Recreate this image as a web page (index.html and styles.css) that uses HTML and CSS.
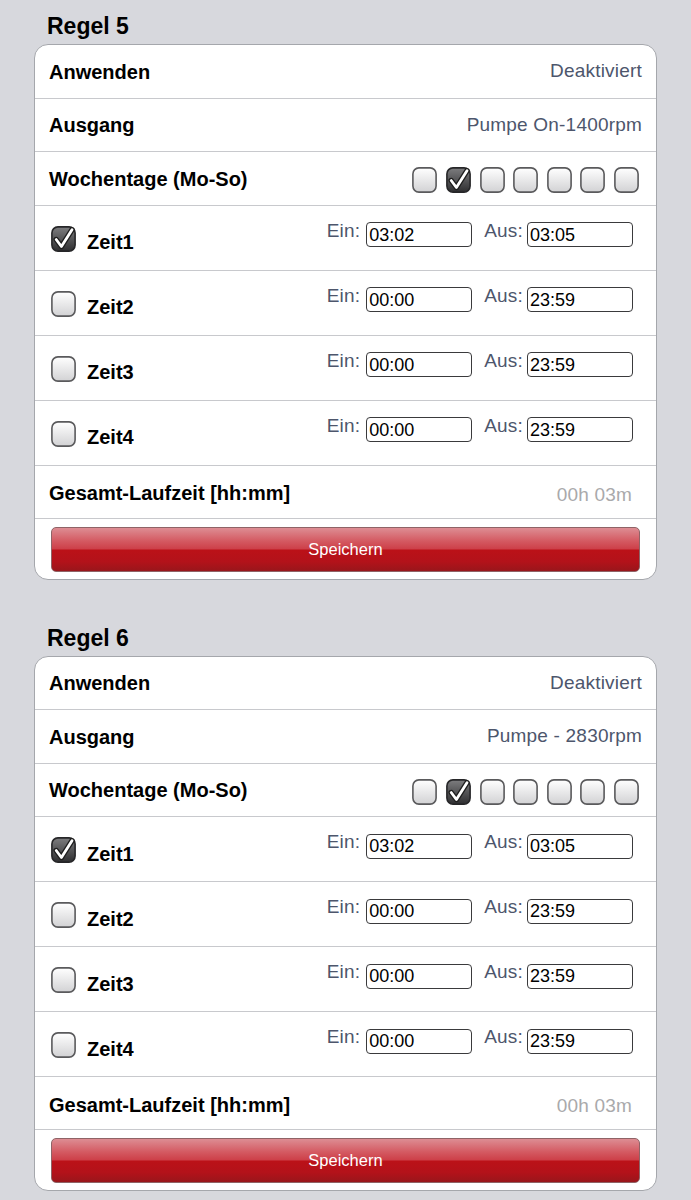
FILE: index.html
```html
<!DOCTYPE html>
<html lang="de">
<head>
<meta charset="utf-8">
<title>Regeln</title>
<link rel="stylesheet" href="styles.css">
</head>
<body>
<svg width="0" height="0" class="defs" aria-hidden="true">
  <defs>
    <linearGradient id="gOff" x1="0" y1="0" x2="0" y2="1">
      <stop offset="0" stop-color="#ffffff"/>
      <stop offset="1" stop-color="#d2d2d4"/>
    </linearGradient>
    <linearGradient id="gOn" x1="0" y1="0" x2="0" y2="1">
      <stop offset="0" stop-color="#7d7d7f"/>
      <stop offset="1" stop-color="#2e2e30"/>
    </linearGradient>
    <symbol id="cbOff" viewBox="0 0 25 26">
      <rect x="0.9" y="0.9" width="23.2" height="24.2" rx="6" ry="6" fill="url(#gOff)" stroke="#5a5a5c" stroke-width="1.6"/>
    </symbol>
    <symbol id="cbOn" viewBox="0 0 25 26">
      <rect x="0.9" y="0.9" width="23.2" height="24.2" rx="6" ry="6" fill="url(#gOn)" stroke="#262628" stroke-width="1.6"/>
      <path d="M5.2 13.5 L10.4 20.5 L21 3.8" fill="none" stroke="#1e1e1e" stroke-width="5.4" stroke-linecap="round" stroke-linejoin="round"/>
      <path d="M5.2 13.5 L10.4 20.5 L21 3.8" fill="none" stroke="#ffffff" stroke-width="2.8" stroke-linecap="round" stroke-linejoin="round"/>
    </symbol>
  </defs>
</svg>

<section class="section">
  <h2 class="title">Regel 5</h2>
  <div class="card">
    <div class="row"><span class="label">Anwenden</span><span class="value">Deaktiviert</span></div>
    <div class="row"><span class="label">Ausgang</span><span class="value">Pumpe On-1400rpm</span></div>
    <div class="row"><span class="label">Wochentage (Mo-So)</span>
      <span class="days">
        <svg class="box"><use href="#cbOff"/></svg>
        <svg class="box"><use href="#cbOn"/></svg>
        <svg class="box"><use href="#cbOff"/></svg>
        <svg class="box"><use href="#cbOff"/></svg>
        <svg class="box"><use href="#cbOff"/></svg>
        <svg class="box"><use href="#cbOff"/></svg>
        <svg class="box"><use href="#cbOff"/></svg>
      </span>
    </div>
    <div class="row time">
      <span class="left"><svg class="box tbox"><use href="#cbOn"/></svg><span class="label tlabel">Zeit1</span></span>
      <span class="right"><span class="value io">Ein:</span><input class="field" value="03:02"><span class="value io aus">Aus:</span><input class="field" value="03:05"></span>
    </div>
    <div class="row time">
      <span class="left"><svg class="box tbox"><use href="#cbOff"/></svg><span class="label tlabel">Zeit2</span></span>
      <span class="right"><span class="value io">Ein:</span><input class="field" value="00:00"><span class="value io aus">Aus:</span><input class="field" value="23:59"></span>
    </div>
    <div class="row time">
      <span class="left"><svg class="box tbox"><use href="#cbOff"/></svg><span class="label tlabel">Zeit3</span></span>
      <span class="right"><span class="value io">Ein:</span><input class="field" value="00:00"><span class="value io aus">Aus:</span><input class="field" value="23:59"></span>
    </div>
    <div class="row time">
      <span class="left"><svg class="box tbox"><use href="#cbOff"/></svg><span class="label tlabel">Zeit4</span></span>
      <span class="right"><span class="value io">Ein:</span><input class="field" value="00:00"><span class="value io aus">Aus:</span><input class="field" value="23:59"></span>
    </div>
    <div class="row total"><span class="label">Gesamt-Laufzeit [hh:mm]</span><span class="value muted">00h 03m</span></div>
    <div class="actions"><button class="save" type="button">Speichern</button></div>
  </div>
</section>

<section class="section">
  <h2 class="title">Regel 6</h2>
  <div class="card">
    <div class="row"><span class="label">Anwenden</span><span class="value">Deaktiviert</span></div>
    <div class="row"><span class="label">Ausgang</span><span class="value">Pumpe - 2830rpm</span></div>
    <div class="row"><span class="label">Wochentage (Mo-So)</span>
      <span class="days">
        <svg class="box"><use href="#cbOff"/></svg>
        <svg class="box"><use href="#cbOn"/></svg>
        <svg class="box"><use href="#cbOff"/></svg>
        <svg class="box"><use href="#cbOff"/></svg>
        <svg class="box"><use href="#cbOff"/></svg>
        <svg class="box"><use href="#cbOff"/></svg>
        <svg class="box"><use href="#cbOff"/></svg>
      </span>
    </div>
    <div class="row time">
      <span class="left"><svg class="box tbox"><use href="#cbOn"/></svg><span class="label tlabel">Zeit1</span></span>
      <span class="right"><span class="value io">Ein:</span><input class="field" value="03:02"><span class="value io aus">Aus:</span><input class="field" value="03:05"></span>
    </div>
    <div class="row time">
      <span class="left"><svg class="box tbox"><use href="#cbOff"/></svg><span class="label tlabel">Zeit2</span></span>
      <span class="right"><span class="value io">Ein:</span><input class="field" value="00:00"><span class="value io aus">Aus:</span><input class="field" value="23:59"></span>
    </div>
    <div class="row time">
      <span class="left"><svg class="box tbox"><use href="#cbOff"/></svg><span class="label tlabel">Zeit3</span></span>
      <span class="right"><span class="value io">Ein:</span><input class="field" value="00:00"><span class="value io aus">Aus:</span><input class="field" value="23:59"></span>
    </div>
    <div class="row time">
      <span class="left"><svg class="box tbox"><use href="#cbOff"/></svg><span class="label tlabel">Zeit4</span></span>
      <span class="right"><span class="value io">Ein:</span><input class="field" value="00:00"><span class="value io aus">Aus:</span><input class="field" value="23:59"></span>
    </div>
    <div class="row total"><span class="label">Gesamt-Laufzeit [hh:mm]</span><span class="value muted">00h 03m</span></div>
    <div class="actions"><button class="save" type="button">Speichern</button></div>
  </div>
</section>
</body>
</html>
```

FILE: styles.css
```css
* { box-sizing: border-box; }

html, body {
  margin: 0;
  padding: 0;
  background: #d7d8dd;
}

body {
  padding: 0 34px;
  font-family: "Liberation Sans", Arial, Helvetica, sans-serif;
  color: #000;
}

.defs {
  position: absolute;
  width: 0;
  height: 0;
  overflow: hidden;
}

.section {
  padding-top: 13px;
}

.section + .section {
  margin-top: 32px;
}

.title {
  margin: 0 0 5px 0;
  padding-left: 13px;
  font-size: 23px;
  line-height: 26px;
  font-weight: bold;
}

.card {
  background: #fff;
  border: 1px solid #a5a7ac;
  border-radius: 14px;
  overflow: hidden;
}

.row {
  display: flex;
  align-items: center;
  justify-content: space-between;
  height: 53.5px;
  padding: 0 14px;
  border-bottom: 1px solid #c8c9cd;
}

.row.time {
  height: 65px;
}

.row.total {
  height: 53px;
}

.label {
  font-size: 20px;
  font-weight: bold;
  margin-top: 2px;
  white-space: nowrap;
}

.value {
  font-size: 19px;
  letter-spacing: 0.2px;
  color: #4d566c;
  white-space: nowrap;
}

.muted {
  color: #a9a9ab;
  margin-right: 10px;
  margin-top: 6px;
}

.total .label {
  margin-top: 4px;
}

.days {
  display: flex;
  gap: 8.6px;
  margin-right: 3px;
  margin-top: 4px;
}

.box {
  width: 25px;
  height: 26px;
  display: block;
  flex: none;
}

.left {
  display: flex;
  align-items: center;
  margin-left: 2px;
  margin-top: 2px;
}

.tlabel {
  margin-left: 11px;
  margin-top: 8px;
}

.right {
  display: flex;
  align-items: center;
  margin-right: 9px;
  margin-bottom: 6px;
}

.io {
  margin-bottom: 8px;
  margin-right: 6px;
}

.io.aus {
  margin-left: 12px;
  margin-right: 4px;
}

.field {
  width: 106px;
  height: 25px;
  border: 1.5px solid #3a3a3c;
  border-radius: 4px;
  padding: 1px 2px 0 2px;
  font-family: "Liberation Sans", Arial, sans-serif;
  font-size: 18px;
  color: #000;
  background: #fff;
  outline: none;
}

.actions {
  padding: 8px 16px 7px 16px;
}

.save {
  display: block;
  width: 100%;
  height: 45px;
  border: 1px solid #8f6366;
  border-radius: 5px;
  background: linear-gradient(to bottom, #dd8d93 0%, #d45a62 30%, #cd3f48 49%, #bb1118 51%, #b3121a 78%, #99161b 100%);
  color: #fff;
  font-family: "Liberation Sans", Arial, sans-serif;
  font-size: 16.5px;
  padding: 0;
  cursor: pointer;
}
```
